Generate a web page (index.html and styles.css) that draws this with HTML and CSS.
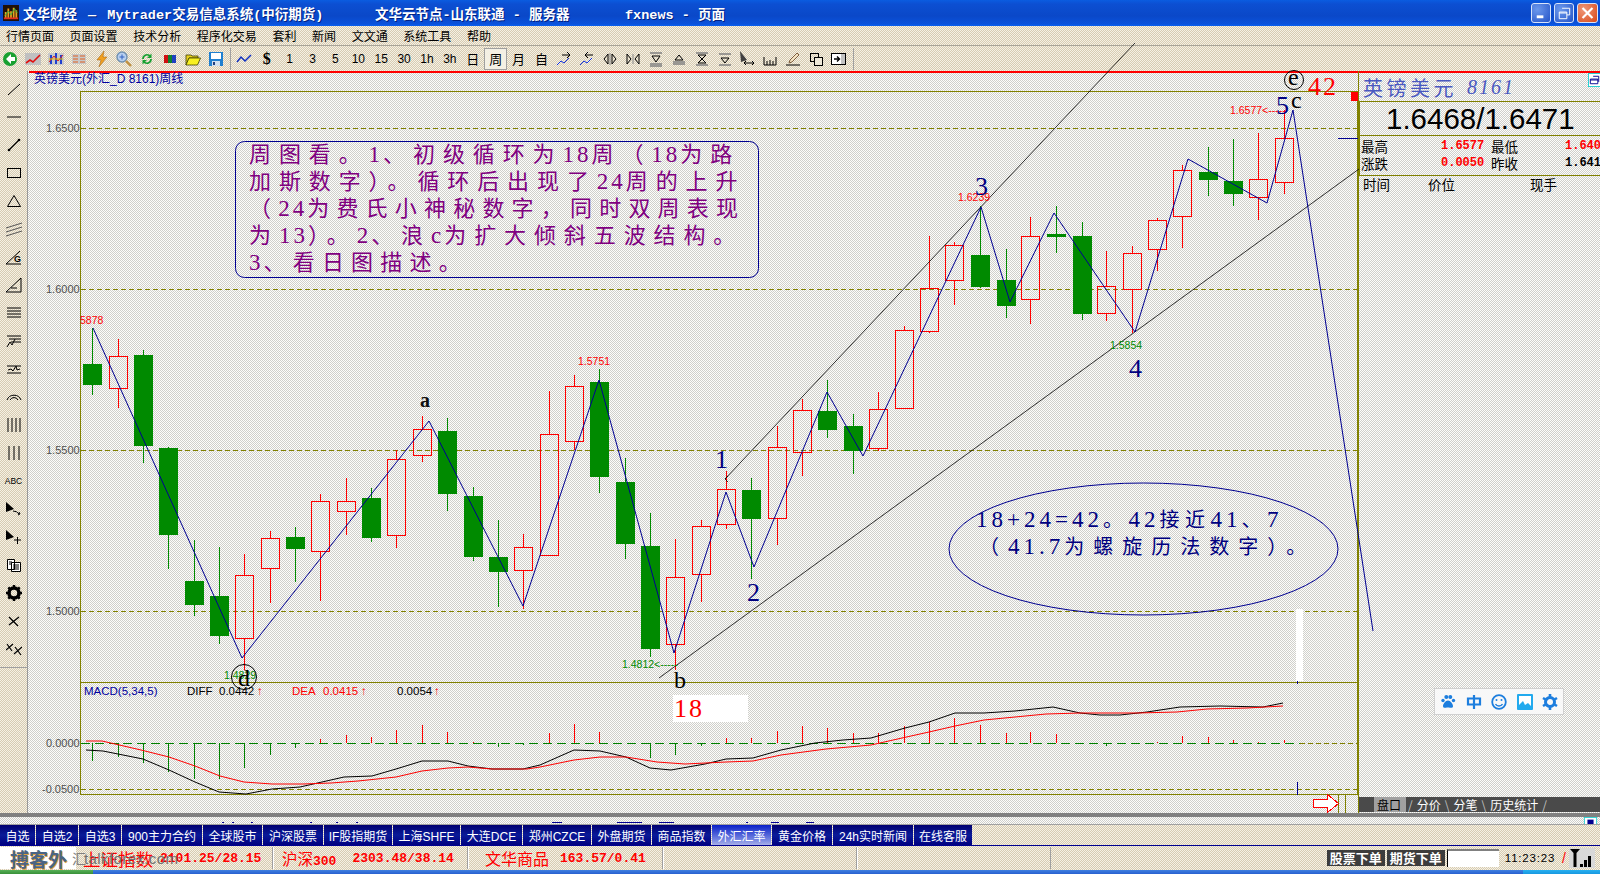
FILE: index.html
```html
<!DOCTYPE html>
<html lang="zh-CN">
<head>
    <meta charset="UTF-8">
    <title>文华财经 Mytrader</title>
    <link rel="stylesheet" href="styles.css">
</head>
<body>
<div class="app">
    <!-- title bar -->
    <div class="titlebar">
        <svg class="app-icon" viewBox="0 0 18 18"><rect width="18" height="18" fill="#201008"/><path d="M3 15V8M6 15V4M9 15V7M12 15V3M15 15V6" stroke="#e8a020" stroke-width="2"/><path d="M2 12l4-5 3 4 4-7 3 5" stroke="#30c040" fill="none"/><path d="M1 15h16" stroke="#e03020" stroke-width="2"/></svg>
        <span class="title-text title-main">文华财经 <span class="dash">—</span> Mytrader交易信息系统(中衍期货)</span>
        <span class="title-text title-node">文华云节点-山东联通 - 服务器</span>
        <span class="title-text title-page">fxnews - 页面</span>
        <div class="win-buttons">
            <div class="win-btn"><svg viewBox="0 0 19 19"><rect x="5" y="12" width="7" height="3" fill="#fff"/></svg></div>
            <div class="win-btn"><svg viewBox="0 0 19 19"><path d="M7.5 4.5h8v7h-3M4.5 8.5h8v7h-8zM4.5 9.5h8" fill="none" stroke="#fff"/></svg></div>
            <div class="win-btn win-close"><svg viewBox="0 0 21 19"><path d="M5 4l11 11M16 4L5 15" stroke="#fff" stroke-width="2.4"/></svg></div>
        </div>
    </div>

    <!-- menu -->
    <div class="menubar">
        <span>行情页面</span><span>页面设置</span><span>技术分析</span><span>程序化交易</span><span>套利</span><span>新闻</span><span>文文通</span><span>系统工具</span><span>帮助</span>
    </div>

    <!-- toolbar -->
    <div class="toolbar">
        <div class="tb"><svg viewBox="0 0 16 16"><circle cx="8" cy="8" r="7" fill="#18a030"/><path d="M9 3L4 8l5 5V10h4V6H9z" fill="#fff"/></svg></div>
        <div class="tb"><svg viewBox="0 0 16 16"><rect y="2" width="16" height="12" fill="#c0c0c0"/><path d="M1 12l4-3 3 2 7-7" stroke="#e01010" stroke-width="1.6" fill="none"/></svg></div>
        <div class="tb"><svg viewBox="0 0 16 16"><rect y="2" width="16" height="12" fill="#c8c8c8"/><path d="M3 4v9M8 2v11M13 4v9" stroke="#2040d0" stroke-width="2"/><path d="M1 11l5-6 4 5 5-6" stroke="#e02020" fill="none"/><path d="M1 8h14" stroke="#e8c000"/></svg></div>
        <div class="tb"><svg viewBox="0 0 16 16"><rect x="1" y="3" width="14" height="10" fill="#c8c8c8"/><path d="M2 5h5M9 5h5M2 8h5M9 8h5M2 11h5M9 11h5" stroke="#e06020"/></svg></div>
        <div class="tb"><svg viewBox="0 0 16 16"><path d="M10 0L3 9h4l-2 7 8-10H9z" fill="#f0a020" stroke="#a06010" stroke-width=".5"/></svg></div>
        <div class="tb"><svg viewBox="0 0 16 16"><circle cx="6" cy="6" r="5" fill="#b8d0f0" stroke="#7090b0" stroke-width="1.4"/><path d="M6 3.5v5M3.5 6h5" stroke="#3060c0"/><path d="M10 10l5 5" stroke="#c09040" stroke-width="2.4"/></svg></div>
        <div class="tb"><svg viewBox="0 0 16 16"><path d="M3 8a5 5 0 0 1 8-4l1.500-1.500V7H8l1.800-1.800A3 3 0 0 0 5 8z" fill="#18a030"/><path d="M13 8a5 5 0 0 1-8 4l-1.500 1.500V9H8l-1.800 1.800A3 3 0 0 0 11 8z" fill="#18a030"/></svg></div>
        <div class="tb"><svg viewBox="0 0 16 16"><rect x="2" y="4" width="4" height="8" fill="#d01010"/><rect x="6" y="4" width="4" height="8" fill="#108030"/><rect x="10" y="4" width="4" height="8" fill="#2040c0"/></svg></div>
        <div class="tb"><svg viewBox="0 0 16 16"><path d="M1 4h5l1 1h6v2H4l-3 7z" fill="#e8d020" stroke="#404000" stroke-width=".8"/><path d="M4 7h11.500l-3 7H1z" fill="#f8f020" stroke="#404000" stroke-width=".8"/></svg></div>
        <div class="tb"><svg viewBox="0 0 16 16"><rect x="1" y="1" width="14" height="14" fill="#2080d0"/><rect x="3" y="2" width="10" height="6" fill="#fff"/><rect x="4" y="10" width="8" height="5" fill="#d0e0f0"/><rect x="5" y="11" width="2" height="3" fill="#204080"/></svg></div>
        <div class="tb-sep"></div>
        <div class="tb"><svg viewBox="0 0 16 16"><path d="M1 11l4-5 4 4 6-6" stroke="#1030c0" stroke-width="1.5" fill="none"/></svg></div>
        <div class="tb tb-dollar">$</div>
        <div class="tb">1</div><div class="tb">3</div><div class="tb">5</div><div class="tb">10</div><div class="tb">15</div><div class="tb">30</div><div class="tb">1h</div><div class="tb">3h</div>
        <div class="tb tb-cn">日</div><div class="tb tb-cn tb-on">周</div><div class="tb tb-cn">月</div><div class="tb tb-cn">自</div>
        <div class="tb"><svg viewBox="0 0 16 16"><path d="M1 14l4-4 3 2 5-5" stroke="#1030e0" fill="none"/><path d="M6 4h8M11 1l3 3-3 3" stroke="#000" fill="none"/></svg></div>
        <div class="tb"><svg viewBox="0 0 16 16"><path d="M1 14l4-4 3 2 5-5" stroke="#1030e0" fill="none"/><path d="M14 4H6M9 1L6 4l3 3" stroke="#000" fill="none"/></svg></div>
        <div class="tb"><svg viewBox="0 0 16 16"><path d="M6 3L2 8l4 5zM10 3l4 5-4 5z" fill="none" stroke="#000"/><path d="M8 2v12" stroke="#888"/></svg></div>
        <div class="tb"><svg viewBox="0 0 16 16"><path d="M2 3l4 5-4 5zM14 3l-4 5 4 5z" fill="none" stroke="#000"/><path d="M8 3v10" stroke="#888"/></svg></div>
        <div class="tb"><svg viewBox="0 0 16 16"><path d="M2 2h12M2 13h12M2 15h12" stroke="#808080" stroke-width="1.5"/><path d="M4 5h8l-4 6z" fill="none" stroke="#000"/></svg></div>
        <div class="tb"><svg viewBox="0 0 16 16"><path d="M2 11h12M2 13h12" stroke="#808080" stroke-width="1.5"/><path d="M4 9h8L8 4z" fill="none" stroke="#000"/></svg></div>
        <div class="tb"><svg viewBox="0 0 16 16"><path d="M2 2h12M2 14h12" stroke="#808080" stroke-width="1.5"/><path d="M4 4h8L8 8zM8 8l4 4H4z" fill="none" stroke="#000"/></svg></div>
        <div class="tb"><svg viewBox="0 0 16 16"><path d="M2 3h12M2 14h12" stroke="#808080" stroke-width="1.5"/><path d="M4 7h8l-4 5z" fill="none" stroke="#000"/></svg></div>
        <div class="tb"><svg viewBox="0 0 16 16"><path d="M1 0l7 9-6 2z" fill="#404040"/><path d="M5 12h10M13 10l2 2-2 2M7 10l-2 2 2 2" stroke="#000" fill="none"/></svg></div>
        <div class="tb"><svg viewBox="0 0 16 16"><path d="M2 6v8h12V6M5 10v4M8 9v5M11 10v4" stroke="#000" fill="none"/></svg></div>
        <div class="tb"><svg viewBox="0 0 16 16"><path d="M1 14h14" stroke="#000"/><path d="M4 12l1-3 7-7 2 2-7 7z" fill="#f0e0c0" stroke="#806040"/></svg></div>
        <div class="tb"><svg viewBox="0 0 16 16"><rect x="2.5" y="2.5" width="8" height="8" fill="none" stroke="#000"/><rect x="6.5" y="6.5" width="8" height="8" fill="#eee8d8" stroke="#000"/></svg></div>
        <div class="tb"><svg viewBox="0 0 16 16"><rect x=".5" y="2.5" width="14" height="11" fill="#fff" stroke="#000"/><path d="M11 3v10M13 3v10" stroke="#888"/><path d="M3 8h5M6 5.500L8.500 8 6 10.500" stroke="#000" stroke-width="1.4" fill="none"/></svg></div>
        <div class="tb-sep"></div>
    </div>

    <!-- main area: drawing tools, chart, quote panel -->
    <div class="main">
        <div class="tools">
            <div class="tool"><svg viewBox="0 0 16 16"><path d="M2 14L14 3" stroke="#000"/></svg></div>
            <div class="tool"><svg viewBox="0 0 16 16"><path d="M1 8h14" stroke="#000"/></svg></div>
            <div class="tool"><svg viewBox="0 0 16 16"><path d="M3 13L13 3" stroke="#000" stroke-width="1.2"/><circle cx="3" cy="13" r="1.3"/><circle cx="13" cy="3" r="1.3"/></svg></div>
            <div class="tool"><svg viewBox="0 0 16 16"><rect x="1.5" y="3.5" width="13" height="9" fill="none" stroke="#000"/></svg></div>
            <div class="tool"><svg viewBox="0 0 16 16"><path d="M8 2.500l6.500 11h-13z" fill="none" stroke="#000"/></svg></div>
            <div class="tool"><svg viewBox="0 0 16 16"><path d="M0 7l16-5M0 11l16-5M0 15l16-5" stroke="#555"/></svg></div>
            <div class="tool"><svg viewBox="0 0 16 16"><path d="M0 15h15M0 15L14 2" stroke="#000" fill="none"/><text class="icon-g" x="8" y="13">G</text></svg></div>
            <div class="tool"><svg viewBox="0 0 16 16"><path d="M15 1v14H0z" fill="none" stroke="#000"/><path d="M5 11h6" stroke="#000"/></svg></div>
            <div class="tool"><svg viewBox="0 0 16 16"><path d="M1 3h14M1 6h14M1 9h14M1 12h14" stroke="#000"/></svg></div>
            <div class="tool"><svg viewBox="0 0 16 16"><path d="M1 3h14M3 6h12M5 9h10" stroke="#000"/><path d="M1 14l3-5 2 3 3-6" stroke="#000" fill="none"/></svg></div>
            <div class="tool"><svg viewBox="0 0 16 16"><path d="M1 5h14M1 12h14" stroke="#000"/><path d="M2 9l3-1 2 2 3-5 1 4 3-1" stroke="#000" fill="none"/></svg></div>
            <div class="tool"><svg viewBox="0 0 16 16"><path d="M1 11a7.500 7.500 0 0 1 14 0M4 11a4.500 4.500 0 0 1 8 0" stroke="#000" fill="none"/></svg></div>
            <div class="tool"><svg viewBox="0 0 16 16"><path d="M2 1v14M6 1v14M10 1v14M14 1v14" stroke="#000"/></svg></div>
            <div class="tool"><svg viewBox="0 0 16 16"><path d="M3 1v14M8 1v14M13 1v14" stroke="#000"/></svg></div>
            <div class="tool tool-abc">ABC</div>
            <div class="tool"><svg viewBox="0 0 16 16"><path d="M0 1l8 7-8 3z" fill="#000"/><path d="M7 10q4 0 6 3M12 14l2-1-1-2" stroke="#000" fill="none"/></svg></div>
            <div class="tool"><svg viewBox="0 0 16 16"><path d="M0 1l8 7-8 3z" fill="#000"/><path d="M8 11h7M11.5 8v7" stroke="#000"/></svg></div>
            <div class="tool"><svg viewBox="0 0 16 16"><path d="M1.5 2.500h7v10h-7zM5.500 5.500h9v9h-9z" fill="#fff" stroke="#000"/><path d="M7 8h6M7 10h6M7 12h6M3 5h3M3 7h2" stroke="#000"/></svg></div>
            <div class="tool"><svg viewBox="0 0 16 16"><circle cx="8" cy="8" r="5" fill="none" stroke="#000" stroke-width="3.6"/><path d="M8 0v3M8 13v3M0 8h3M13 8h3M2.300 2.300l2 2M11.700 11.700l2 2M2.300 13.700l2-2M11.700 4.300l2-2" stroke="#000" stroke-width="2.4"/></svg></div>
            <div class="tool"><svg viewBox="0 0 16 16"><path d="M3 12l10-8M3 4l9 9" stroke="#000" stroke-width="1.3"/></svg></div>
            <div class="tool"><svg viewBox="0 0 16 16"><path d="M0 9l7-6M1 3l5 7M8 13l8-7M9 6l6 8" stroke="#000" stroke-width="1.2"/></svg></div>
            <div class="tool-rule"></div>
        </div>

        <div class="chart-wrap">
            <svg class="chart" viewBox="28 71 1330 742" width="1330" height="742">
                <path class="top-rule" d="M29 72H1358"/>
                <text class="chart-title" x="34" y="83">英镑美元(外汇_D 8161)周线</text>

                <!-- frame and grid -->
                <path class="frame" d="M80.5 91.5H1357.5V794.5H80.5zM80.5 682.5H1357.5"/>
                <path class="grid" d="M81 128.5H1357M81 289.5H1357M81 450.5H1357M81 611.5H1357M81 789.5H1357"/>
                <path class="grid-zero" d="M81 743.5H1300"/>
                <path class="grid" d="M1300 743.5H1357"/>
                <path class="frame-thick" d="M1357.5 680V794"/>

                <text class="axis" x="46" y="132">1.6500</text>
                <text class="axis" x="46" y="293">1.6000</text>
                <text class="axis" x="46" y="454">1.5500</text>
                <text class="axis" x="46" y="615">1.5000</text>
                <text class="axis" x="46" y="747">0.0000</text>
                <text class="axis" x="42" y="793">-0.0500</text>

                <!-- white patches left on the picture -->
                <rect class="patch" x="673" y="695" width="75" height="27"/>
                <rect class="patch" x="1296" y="609" width="7" height="72"/>

                <!-- green candles -->
                <path class="candle-down" d="M92.5 328V395M83.5 364.5h18v20h-18z
                    M143.5 350V463M134.5 355.5h18v90h-18z
                    M168.5 447V569M159.5 448.5h18v86h-18z
                    M194.5 540V616M185.5 581.5h18v23h-18z
                    M219.5 547V644M210.5 596.5h18v39h-18z
                    M295.5 527V582M286.5 537.5h18v11h-18z
                    M371.5 488V542M362.5 498.5h18v39h-18z
                    M447.5 418V511M438.5 431.5h18v62h-18z
                    M473.5 487V561M464.5 496.5h18v60h-18z
                    M498.5 520V607M489.5 557.5h18v14h-18z
                    M599.5 369V493M590.5 382.5h18v94h-18z
                    M625.5 458V559M616.5 482.5h18v61h-18z
                    M650.5 513V657M641.5 546.5h18v102h-18z
                    M751.5 478V579M742.5 490.5h18v28h-18z
                    M827.5 380V438M818.5 411.5h18v18h-18z
                    M853.5 414V474M844.5 426.5h18v24h-18z
                    M980.5 206V288M971.5 255.5h18v31h-18z
                    M1006.5 249V318M997.5 280.5h18v25h-18z
                    M1056.5 206V253M1047.5 234.5h18v2h-18z
                    M1082.5 222V320M1073.5 236.5h18v77h-18z
                    M1208.5 147V196M1199.5 172.5h18v7h-18z
                    M1233.5 139V206M1224.5 181.5h18v12h-18z"/>

                <!-- red candles -->
                <path class="candle-up" d="M118.5 339V356M118.5 388V408M109.5 356.5h18v32h-18z
                    M244.5 554V575M244.5 638V670M235.5 575.5h18v63h-18z
                    M270.5 531V538M270.5 568V603M261.5 538.5h18v30h-18z
                    M320.5 494V501M320.5 551V601M311.5 501.5h18v50h-18z
                    M346.5 478V501M346.5 511V535M337.5 501.5h18v10h-18z
                    M396.5 450V459M396.5 535V548M387.5 459.5h18v76h-18z
                    M422.5 416V429M422.5 455V462M413.5 429.5h18v26h-18z
                    M523.5 534V547M523.5 570V609M514.5 547.5h18v23h-18z
                    M549.5 391V434M540.5 434.5h18v121h-18z
                    M574.5 375V386M574.5 441V450M565.5 386.5h18v55h-18z
                    M675.5 539V577M675.5 644V670M666.5 577.5h18v67h-18z
                    M701.5 520V526M701.5 574V602M692.5 526.5h18v48h-18z
                    M726.5 471V489M726.5 524V529M717.5 489.5h18v35h-18z
                    M777.5 426V447M777.5 518V545M768.5 447.5h18v71h-18z
                    M802.5 399V410M802.5 452V476M793.5 410.5h18v42h-18z
                    M878.5 392V409M878.5 448V451M869.5 409.5h18v39h-18z
                    M904.5 326V330M895.5 330.5h18v78h-18z
                    M929.5 236V288M929.5 331V333M920.5 288.5h18v43h-18z
                    M954.5 242V245M954.5 280V305M945.5 245.5h18v35h-18z
                    M1030.5 217V236M1030.5 299V324M1021.5 236.5h18v63h-18z
                    M1106.5 251V286M1106.5 313V321M1097.5 286.5h18v27h-18z
                    M1132.5 246V253M1132.5 289V333M1123.5 253.5h18v36h-18z
                    M1157.5 218V220M1157.5 249V271M1148.5 220.5h18v29h-18z
                    M1182.5 165V170M1182.5 216V248M1173.5 170.5h18v46h-18z
                    M1258.5 133V179M1258.5 197V220M1249.5 179.5h18v18h-18z
                    M1284.5 110V138M1284.5 182V194M1275.5 138.5h18v44h-18z"/>

                <!-- channel lines -->
                <path class="trend" d="M725 479L1135 43M725 479l3-3M725 479l3 3M659 678L1359 169"/>

                <!-- wave count -->
                <path class="wave" d="M93 328L242 658 429 421 523 606 599 380 674 653 726 492 754 567 827 392 863 456 981 207 1010 302 1054 213 1135 332 1188 159 1267 203 1293 110 1373 631"/>

                <!-- MACD -->
                <text class="macd-label" x="84" y="695">MACD(5,34,5)</text>
                <text class="macd-val" x="187" y="695">DIFF</text>
                <text class="macd-val" x="219" y="695">0.0442</text>
                <text class="macd-arrow" x="257" y="695">↑</text>
                <text class="macd-red" x="292" y="695">DEA</text>
                <text class="macd-red" x="323" y="695">0.0415</text>
                <text class="macd-arrow" x="361" y="695">↑</text>
                <text class="macd-val" x="397" y="695">0.0054</text>
                <text class="macd-arrow" x="434" y="695">↑</text>

                <path class="bars-down" d="M92.5 743V761M118.5 743V757M143.5 743V763M168.5 743V772M194.5 743V779M219.5 743V779M244.5 743V768M270.5 743V755M295.5 743V748M498.5 743V747M523.5 743V745M650.5 743V758M675.5 743V755M701.5 743V746M1106.5 743V746"/>
                <path class="bars-up" d="M320.5 743V739M346.5 743V735M371.5 743V737M396.5 743V730M422.5 743V725M447.5 743V732M473.5 743V742M549.5 743V733M574.5 743V724M599.5 743V732M726.5 743V738M751.5 743V738M777.5 743V731M802.5 743V726M827.5 743V728M853.5 743V733M878.5 743V733M904.5 743V726M929.5 743V722M954.5 743V718M980.5 743V725M1006.5 743V733M1030.5 743V732M1056.5 743V734M1157.5 743V742M1182.5 743V736M1208.5 743V737M1233.5 743V740M1258.5 743V742M1284.5 743V740"/>
                <path class="macd-black" d="M86 750L103 751 143 759 169 770 195 782 219 792 246 794 272 789 300 787 344 777 372 776 396 769 422 761 448 761 468 766 492 769 523 769 540 765 574 750 600 751 626 757 650 768 671 770 705 764 726 759 753 758 781 750 815 743 843 740 871 738 905 728 929 722 955 713 984 713 1015 711 1053 707 1080 713 1100 715 1120 715 1147 712 1180 707 1220 706 1263 707 1283 703"/>
                <path class="macd-redline" d="M86 741L102 741 141 750 169 757 195 766 220 776 244 782 272 784 303 784 331 783 358 781 396 777 422 771 448 768 468 767 492 769 527 769 540 767 574 760 600 757 626 757 657 762 685 764 726 762 753 761 781 755 826 749 871 745 902 738 929 732 955 726 984 720 1015 717 1046 714 1080 713 1137 713 1177 712 1207 709 1247 708 1283 706"/>

                <!-- price tags -->
                <text class="tag tag-red" x="80" y="324">5878</text>
                <text class="tag tag-red" x="578" y="365">1.5751</text>
                <text class="tag tag-red" x="958" y="201">1.6239</text>
                <text class="tag tag-red" x="1230" y="114">1.6577&lt;-----</text>
                <text class="tag tag-green" x="622" y="668">1.4812&lt;-----</text>
                <text class="tag tag-green" x="1110" y="349">1.5854</text>
                <text class="tag tag-green" x="224" y="679">1.4829</text>

                <!-- wave labels -->
                <text class="wave-num" x="715" y="468">1</text>
                <text class="wave-num" x="747" y="601">2</text>
                <text class="wave-num" x="975" y="195">3</text>
                <text class="wave-num" x="1129" y="377">4</text>
                <text class="wave-num" x="1276" y="114">5</text>
                <text class="wave-let" x="420" y="407">a</text>
                <text class="wave-let wave-big" x="674" y="688">b</text>
                <text class="wave-let wave-big" x="1291" y="108">c</text>
                <circle class="ring" cx="244" cy="677" r="12.5"/>
                <text class="wave-let wave-big" x="238" y="686">d</text>
                <circle class="ring" cx="1294" cy="80" r="9.5"/>
                <text class="wave-let wave-big" x="1288" y="85">e</text>
                <text class="count" x="674" y="717">18</text>
                <text class="count" x="1308" y="95">42</text>
                <rect class="marker" x="1351" y="92" width="7" height="9"/>

                <!-- notes -->
                <rect class="note-box" x="235.5" y="141.5" width="523" height="136" rx="9"/>
                <text class="note">
                    <tspan x="249" y="162">周图看。<tspan class="d">1</tspan>、初级循环为<tspan class="d">18</tspan>周（<tspan class="d">18</tspan>为路</tspan>
                    <tspan x="249" y="189">加斯数字）。循环后出现了<tspan class="d">24</tspan>周的上升</tspan>
                    <tspan class="tight" x="249" y="216">（<tspan class="d">24</tspan>为费氏小神秘数字，同时双周表现</tspan>
                    <tspan x="249" y="243">为<tspan class="d">13</tspan>）。<tspan class="d">2</tspan>、浪<tspan class="d">c</tspan>为扩大倾斜五波结构。</tspan>
                    <tspan class="tight" x="249" y="270"><tspan class="d">3</tspan>、看日图描述。</tspan>
                </text>
                <ellipse class="note-box" cx="1143.5" cy="549" rx="194.5" ry="66"/>
                <text class="note note-blue">
                    <tspan x="976" y="527"><tspan class="d">18+24=42</tspan>。<tspan class="d">42</tspan>接近<tspan class="d">41</tspan>、<tspan class="d">7</tspan></tspan>
                    <tspan class="wide" x="979" y="554">（<tspan class="d">41.7</tspan>为螺旋历法数字）。</tspan>
                </text>

                <!-- odds and ends at the edges -->
                <path class="frame" d="M1338.5 795V813M1345.5 795V813"/>
                <path class="arrow" d="M1313.5 799.5h14v-5l11 9-11 9v-5h-14z"/>
                <path class="wave" d="M1338 138.5H1358M1297.5 681V684M1297.5 782V795"/>
                <path class="blue-dash" d="M222 822.5h2M232 822.5h2M251 822.5h2M310 822.5h2M336 822.5h2M356 822.5h2M552 822.5h10M617 822.5h25M659 822.5h15M746 822.5h2M771 822.5h8M806 822.5h8"/>
            </svg>
        </div>

        <div class="quote">
            <div class="quote-head">
                <span class="quote-name">英镑美元</span><span class="quote-code">8161</span>
                <svg class="restore" viewBox="0 0 15 15"><rect x=".5" y=".5" width="14" height="14" fill="#fff" stroke="#20d0d0"/><path d="M5.500 3.500h6v6M2.500 6.500h8v5h-8zM2.500 7.500h8" fill="none" stroke="#000090"/></svg>
            </div>
            <div class="quote-price">1.6468/1.6471</div>
            <div class="quote-stats">
                <span>最高</span><b class="up">1.6577</b><span>最低</span><b class="up">1.640</b>
                <span>涨跌</span><b class="up">0.0050</b><span>昨收</span><b>1.641</b>
            </div>
            <div class="quote-cols"><span>时间</span><span>价位</span><span>现手</span></div>
            <div class="ime">
                <svg viewBox="0 0 16 16"><circle cx="3" cy="6.500" r="1.700"/><circle cx="6.300" cy="3" r="2"/><circle cx="10.300" cy="3" r="2"/><circle cx="13.500" cy="6.500" r="1.700"/><path d="M8 6.500c-2.500 0-5 3.500-5 5.500 0 2 2 2 3 1.700.8-.2 2.500-.2 4 0 1 .3 3.200.2 3-1.700 0-2-2.500-5.500-5-5.500z"/></svg>
                <svg class="ime-stroke" viewBox="0 0 16 16"><path d="M2 4.500h12v6H2zM8 1v14" stroke-width="2.2"/></svg>
                <svg class="ime-stroke" viewBox="0 0 16 16"><circle cx="8" cy="8" r="6.800" stroke-width="1.8"/><circle class="dot" cx="5.500" cy="6" r="1"/><circle class="dot" cx="10.500" cy="6" r="1"/><path d="M4.500 10a4 4 0 0 0 7 0" stroke-width="1.5"/></svg>
                <svg viewBox="0 0 16 16"><rect width="16" height="16" rx="1" fill="#22aaee"/><path d="M2 2h12v10l-3-3-3 2-2-4-4 4z" fill="#fff"/></svg>
                <svg class="ime-stroke" viewBox="0 0 16 16"><circle cx="8" cy="8" r="4.500" stroke-width="3"/><path d="M8 0v3M8 13v3M1 4l2.500 1.500M12.500 10.500L15 12M1 12l2.500-1.500M12.500 5.500L15 4" stroke-width="2.6"/></svg>
            </div>
            <div class="quote-tabs">
                <span class="qt qt-on">盘口</span><i>/</i><span class="qt">分价</span><i>\</i><span class="qt">分笔</span><i>\</i><span class="qt">历史统计</span><i>/</i>
            </div>
        </div>
    </div>

    <div class="hbar"></div>
    <div class="strip"><svg class="strip-icon" viewBox="0 0 15 8"><rect x=".5" y=".5" width="14" height="8" fill="#fff" stroke="#20d0d0"/><path d="M4 3h7v5H4z" fill="#000090"/></svg></div>

    <!-- page tabs -->
    <div class="tabs">
        <span class="tab t35">自选</span><span class="tab t42">自选2</span><span class="tab t42">自选3</span><span class="tab t80">900主力合约</span><span class="tab">全球股市</span><span class="tab t60">沪深股票</span><span class="tab t68">IF股指期货</span><span class="tab t67">上海SHFE</span><span class="tab t61">大连DCE</span><span class="tab t68">郑州CZCE</span><span class="tab">外盘期货</span><span class="tab">商品指数</span><span class="tab tab-on">外汇汇率</span><span class="tab t60">黄金价格</span><span class="tab t80">24h实时新闻</span><span class="tab t58">在线客服</span>
    </div>

    <!-- status -->
    <div class="status">
        <div class="cell cell-sh"><span class="idx idx-sh">上证指数</span><span class="num">2101.25/28.15</span></div>
        <div class="cell cell-hs"><span class="idx">沪深<b>300</b></span><span class="num">2303.48/38.14</span></div>
        <div class="cell cell-wh"><span class="idx idx-wh">文华商品</span><span class="num">163.57/0.41</span></div>
        <div class="cell cell-e"></div>
        <div class="cell cell-e"></div>
        <div class="order order-first">股票下单</div>
        <div class="order">期货下单</div>
        <div class="code-input"></div>
        <span class="clock">11:23:23</span>
        <span class="slash">/</span>
        <svg class="signal" viewBox="0 0 26 20"><rect width="26" height="20" fill="#d8d8d8"/><path d="M1 1h10L7.500 5v14h-3V5z" fill="#000"/><path d="M11 16h3v3h-3zM15 12h3v7h-3zM19 8h3v11h-3z" fill="#000"/></svg>
        <div class="watermark"><span class="wm-cn">搏客外</span><span class="wm-hui">汇</span><span class="wm-en">talkforex.com</span></div>
    </div>
    <div class="taskbar"><div class="start"></div><div class="tray"></div></div>
</div>
</body>
</html>
```

FILE: styles.css
```css
html, body {
    margin: 0;
    padding: 0;
}
body {
    width: 1600px;
    height: 874px;
    overflow: hidden;
    font-family: "Noto Sans CJK SC", sans-serif;
}
.app {
    width: 1600px;
    height: 874px;
    display: flex;
    flex-direction: column;
    background: repeating-conic-gradient(#d6cbb2 0 25%, #f6f1e4 0 50%) 0 0 / 2px 2px;
}

/* title bar */
.titlebar {
    height: 26px;
    flex: none;
    display: flex;
    align-items: center;
    padding-left: 3px;
    background: linear-gradient(#0a5ce0 0, #0c4fd2 4px, #0a48c8 16px, #0a52dc 24px, #0a60f0 26px);
    color: #fff;
}
.app-icon {
    width: 16px;
    height: 16px;
    flex: none;
}
.title-text {
    font-size: 13.5px;
    font-weight: 700;
    white-space: nowrap;
    text-shadow: 1px 1px 0 #002080;
    font-family: "Liberation Mono", "Noto Sans CJK SC", monospace;
}
.title-main { margin-left: 4px; width: 352px; }
.title-node { width: 250px; }
.title-page { width: 200px; }
.dash { margin: 0 3px; }
.win-buttons {
    margin-left: auto;
    margin-right: 2px;
    display: flex;
    gap: 3px;
}
.win-btn {
    width: 20px;
    height: 20px;
    border: 1px solid #d8e4fa;
    border-radius: 3px;
    box-sizing: border-box;
    background: radial-gradient(circle at 30% 30%, #6c98ec, #2454c8);
}
.win-btn svg { display: block; width: 100%; height: 100%; }
.win-close {
    width: 21px;
    background: radial-gradient(circle at 30% 30%, #f09878, #d84818);
}

/* menu */
.menubar {
    height: 20px;
    flex: none;
    display: flex;
    align-items: center;
    padding-left: 6px;
    gap: 15.6px;
    font-size: 12px;
    color: #000;
    box-sizing: border-box;
    border-bottom: 1px solid #a8a498;
}

/* toolbar */
.toolbar {
    height: 25px;
    flex: none;
    display: flex;
    align-items: center;
    margin-left: -1.5px;
    font-family: "Liberation Sans", "Noto Sans CJK SC", sans-serif;
    font-size: 12px;
    color: #000;
}
.tb {
    width: 22.9px;
    height: 22px;
    flex: none;
    display: flex;
    align-items: center;
    justify-content: center;
    box-sizing: border-box;
}
.tb svg { width: 16px; height: 16px; display: block; }
.tb-cn { font-size: 13px; }
.tb-on { border: 1px solid #a0a0a0; background: #f4f0e4; }
.tb-dollar {
    font-family: "Liberation Serif", serif;
    font-weight: 700;
    font-size: 16px;
}
.tb-sep {
    width: 1px;
    height: 22px;
    background: #a0a0a0;
    margin: 0 1px 0 3px;
    flex: none;
}

/* main */
.main {
    height: 742px;
    flex: none;
    display: flex;
    position: relative;
}
.tools {
    width: 28px;
    flex: none;
    box-sizing: border-box;
    padding-top: 4px;
    border-right: 1px solid #989898;
}
.tool {
    height: 28px;
    width: 27px;
    display: flex;
    align-items: center;
    justify-content: center;
}
.tool svg { width: 16px; height: 16px; display: block; }
.tool-abc {
    font-family: "Liberation Sans", sans-serif;
    font-size: 8.5px;
}
.tool-rule {
    height: 1px;
    margin-top: 4px;
    background: #a0a0a0;
}
.icon-g {
    font-family: "Liberation Sans", sans-serif;
    font-size: 9px;
    font-weight: 700;
}
.chart-wrap {
    width: 1330px;
    flex: none;
    position: relative;
    z-index: 1;
    background: repeating-conic-gradient(#cfcfcb 0 25%, #fdfdfb 0 50%) 0 0 / 2px 2px;
}
.chart {
    display: block;
    overflow: visible;
}
.chart text { white-space: pre; }
.top-rule { fill: none; stroke: #f00; stroke-width: 2; shape-rendering: crispEdges; }
.chart-title {
    font-size: 12px;
    fill: #0000a0;
    font-family: "Liberation Sans", "Noto Sans CJK SC", sans-serif;
}
.frame { fill: none; stroke: #808000; stroke-width: 1; shape-rendering: crispEdges; }
.frame-thick { stroke: #808000; stroke-width: 1.5; shape-rendering: crispEdges; }
.grid { fill: none; stroke: #808000; stroke-dasharray: 5 3; shape-rendering: crispEdges; }
.grid-zero { fill: none; stroke: #008000; stroke-dasharray: 9 5; shape-rendering: crispEdges; }
.axis {
    font-family: "Liberation Sans", sans-serif;
    font-size: 11px;
    fill: #505050;
}
.patch { fill: #fff; }
.candle-down { fill: #008a00; stroke: #008a00; shape-rendering: crispEdges; }
.candle-up { fill: none; stroke: #f00; shape-rendering: crispEdges; }
.trend { fill: none; stroke: #000; stroke-width: .8; }
.wave { fill: none; stroke: #000090; stroke-width: 1; }
.macd-label, .macd-val, .macd-red, .macd-arrow {
    font-family: "Liberation Sans", sans-serif;
    font-size: 11.5px;
}
.macd-label { fill: #0000a0; }
.macd-val { fill: #000; }
.macd-red, .macd-arrow { fill: #f00; }
.bars-down { fill: none; stroke: #008000; shape-rendering: crispEdges; }
.bars-up { fill: none; stroke: #f00; shape-rendering: crispEdges; }
.macd-black { fill: none; stroke: #000; stroke-width: 1; }
.macd-redline { fill: none; stroke: #f00; stroke-width: 1; }
.tag {
    font-family: "Liberation Sans", sans-serif;
    font-size: 10.5px;
}
.tag-red { fill: #f00; }
.tag-green { fill: #008a00; }
.wave-num {
    font-family: "Liberation Serif", serif;
    font-size: 26px;
    fill: #000080;
}
.wave-let {
    font-family: "Liberation Serif", serif;
    font-size: 20px;
    font-weight: 700;
    fill: #101010;
}
.wave-big { font-size: 24px; font-weight: 400; fill: #000; }
.ring { fill: none; stroke: #000; }
.count {
    font-family: "Liberation Serif", serif;
    font-size: 26px;
    fill: #f00;
    letter-spacing: 2px;
}
.marker { fill: #f00; }
.note-box { fill: none; stroke: #000090; }
.note {
    font-family: "Noto Sans CJK SC", sans-serif;
    font-size: 22px;
    letter-spacing: 7.9px;
    fill: #800080;
}
.note .tight { letter-spacing: 7.2px; }
.note .d {
    font-family: "Liberation Serif", serif;
    font-size: 23px;
    letter-spacing: 3px;
}
.note-blue { fill: #000080; font-size: 20px; letter-spacing: 5.5px; }
.note-blue .wide { letter-spacing: 9px; }
.note-blue .d { letter-spacing: 4px; }
.arrow { fill: #fff; stroke: #f00; shape-rendering: crispEdges; }
.blue-dash { fill: none; stroke: #000090; }

/* quote panel */
.quote {
    flex: 1;
    position: relative;
    box-sizing: border-box;
    padding-right: 2px;
    background: repeating-conic-gradient(#cfcfcb 0 25%, #fdfdfb 0 50%) 0 0 / 2px 2px;
    border-left: 1px solid #808000;
    display: flex;
    flex-direction: column;
}
.quote-head {
    height: 30px;
    flex: none;
    display: flex;
    align-items: center;
    padding-left: 4px;
    color: #4a58c0;
    border-top: 2px solid #f00;
    box-sizing: border-box;
    position: relative;
}
.quote-name {
    font-size: 20px;
    letter-spacing: 3.5px;
}
.quote-code {
    font-family: "Liberation Serif", serif;
    font-style: italic;
    font-size: 20px;
    letter-spacing: 2px;
    margin-left: 10px;
}
.restore {
    position: absolute;
    right: 0;
    top: 0;
    width: 14px;
    height: 14px;
}
.quote-price {
    height: 35px;
    flex: none;
    box-sizing: border-box;
    border: 1px solid #808000;
    padding-left: 26px;
    display: flex;
    align-items: center;
    font-family: "Liberation Sans", sans-serif;
    font-size: 29.5px;
    color: #000;
}
.quote-stats {
    height: 40px;
    flex: none;
    box-sizing: border-box;
    border: 1px solid #808000;
    border-top: 0;
    padding: 1px 0 0 1px;
    display: grid;
    grid-template-columns: 80px 50px 74px 1fr;
    grid-auto-rows: 17px;
    align-items: center;
    font-size: 13.5px;
    overflow: hidden;
    white-space: nowrap;
}
.quote-stats b {
    font-family: "Liberation Mono", monospace;
    font-size: 12px;
    color: #000;
}
.quote-stats b.up { color: #f00; }
.quote-cols {
    display: flex;
    height: 15px;
    align-items: center;
    font-size: 13.5px;
    padding-left: 4px;
    flex: none;
}
.quote-cols span:nth-child(1) { width: 65px; }
.quote-cols span:nth-child(2) { width: 102px; }
.ime {
    position: absolute;
    left: 75px;
    top: 617px;
    width: 130px;
    height: 27px;
    box-sizing: border-box;
    background: #f8f8f8;
    border: 1px solid #d0d0d0;
    display: flex;
    align-items: center;
    justify-content: space-between;
    padding: 0 5px;
    fill: #1d7ede;
}
.ime svg { width: 16px; height: 16px; }
.ime-stroke { fill: none; stroke: #1d7ede; }
.ime-stroke .dot { fill: #1d7ede; stroke: none; }
.quote-tabs {
    margin-top: auto;
    margin-bottom: 1px;
    height: 15px;
    background: #4a4a4a;
    display: flex;
    align-items: center;
    padding-left: 15px;
    font-size: 12px;
    color: #fff;
    flex: none;
}
.qt { padding: 0 2px; line-height: 15px; }
.qt-on {
    background: #a0a0a0;
    color: #000;
    padding: 0 5px 0 3px;
}
.quote-tabs i {
    font-style: normal;
    color: #c0c0c0;
    padding: 0 2px;
}

/* lower bars */
.hbar {
    height: 4px;
    flex: none;
    background: #808080;
}
.strip {
    height: 8px;
    flex: none;
    background: repeating-conic-gradient(#cfcfcb 0 25%, #fdfdfb 0 50%) 0 0 / 2px 2px;
    border-bottom: 1px solid #a0a0a0;
    box-sizing: border-box;
    display: flex;
    justify-content: flex-end;
    padding-right: 2px;
}
.strip-icon { width: 15px; height: 7px; }
.tabs {
    height: 20px;
    flex: none;
    display: flex;
    border-bottom: 1px solid #000090;
}
.tab {
    width: 59px;
    margin-right: 1px;
    flex: none;
    display: flex;
    align-items: center;
    justify-content: center;
    background: linear-gradient(#000070, #0a1a98 50%, #000080);
    color: #fff;
    font-size: 12px;
    font-family: "Liberation Sans", "Noto Sans CJK SC", sans-serif;
    white-space: nowrap;
}
.t35 { width: 35px; }
.t42 { width: 42px; }
.t58 { width: 58px; }
.t60 { width: 60px; }
.t61 { width: 61px; }
.t67 { width: 67px; }
.t68 { width: 68px; }
.t80 { width: 80px; }
.tab-on {
    background: linear-gradient(#0820c8, #7080e0 70%, #a8b0e8);
}

/* status bar */
.status {
    height: 24px;
    flex: none;
    display: flex;
    align-items: center;
    position: relative;
    font-size: 13px;
    padding-right: 5px;
}
.cell {
    height: 22px;
    box-sizing: border-box;
    border-right: 1px solid #a0a0a0;
    border-left: 1px solid #fff;
    display: flex;
    align-items: center;
    flex: none;
    color: #f00;
    white-space: nowrap;
}
.cell-sh { width: 273px; padding-left: 82px; }
.cell-hs { width: 195px; padding-left: 8px; }
.cell-wh { width: 195px; padding-left: 16px; }
.cell-e { width: 194px; }
.idx { font-size: 15.5px; }
.idx-sh { font-size: 17.5px; margin-right: 7px; }
.idx-wh { font-size: 16px; margin-right: 11px; }
.idx b {
    font-family: "Liberation Mono", monospace;
    font-size: 13px;
}
.num {
    font-family: "Liberation Mono", monospace;
    font-weight: 700;
    font-size: 13px;
}
.cell-hs .num { margin-left: 16px; }
.order {
    width: 58px;
    height: 16px;
    margin-left: 2px;
    background: #3c3c3c;
    color: #fff;
    font-size: 13px;
    font-weight: 700;
    line-height: 16px;
    text-align: center;
    flex: none;
}
.order-first { margin-left: auto; }
.code-input {
    width: 52px;
    height: 18px;
    margin-left: 2px;
    box-sizing: border-box;
    background: #fff;
    border-top: 2px solid #808080;
    border-left: 1px solid #000;
    flex: none;
}
.clock {
    margin-left: 6px;
    font-family: "Liberation Sans", sans-serif;
    font-size: 11.5px;
    letter-spacing: .8px;
    color: #000;
    flex: none;
}
.slash {
    margin-left: 7px;
    color: #f00;
    font-family: "Liberation Sans", sans-serif;
    font-size: 14px;
}
.signal {
    width: 26px;
    height: 20px;
    margin-left: 3px;
    flex: none;
}
.watermark {
    position: absolute;
    left: 0;
    top: 1px;
    width: 66px;
    height: 22px;
    padding-left: 10px;
    background: #fff;
    display: flex;
    align-items: center;
    white-space: nowrap;
}
.wm-cn {
    font-size: 19px;
    font-weight: 700;
    color: #4a6484;
    text-shadow: 1px 1px 0 #e0a040;
}
.wm-hui {
    font-size: 14px;
    color: #808080;
    margin-left: 5px;
}
.wm-en {
    font-family: "Liberation Sans", sans-serif;
    font-size: 15px;
    color: #707070;
    margin-left: -2px;
    letter-spacing: .4px;
}
.taskbar {
    flex: 1;
    display: flex;
    justify-content: space-between;
    background: linear-gradient(#4080e0, #2860d0);
}
.start { width: 93px; background: linear-gradient(#58b058, #389038); }
.tray { width: 77px; background: linear-gradient(#28b0f0, #1898e0); }
```
